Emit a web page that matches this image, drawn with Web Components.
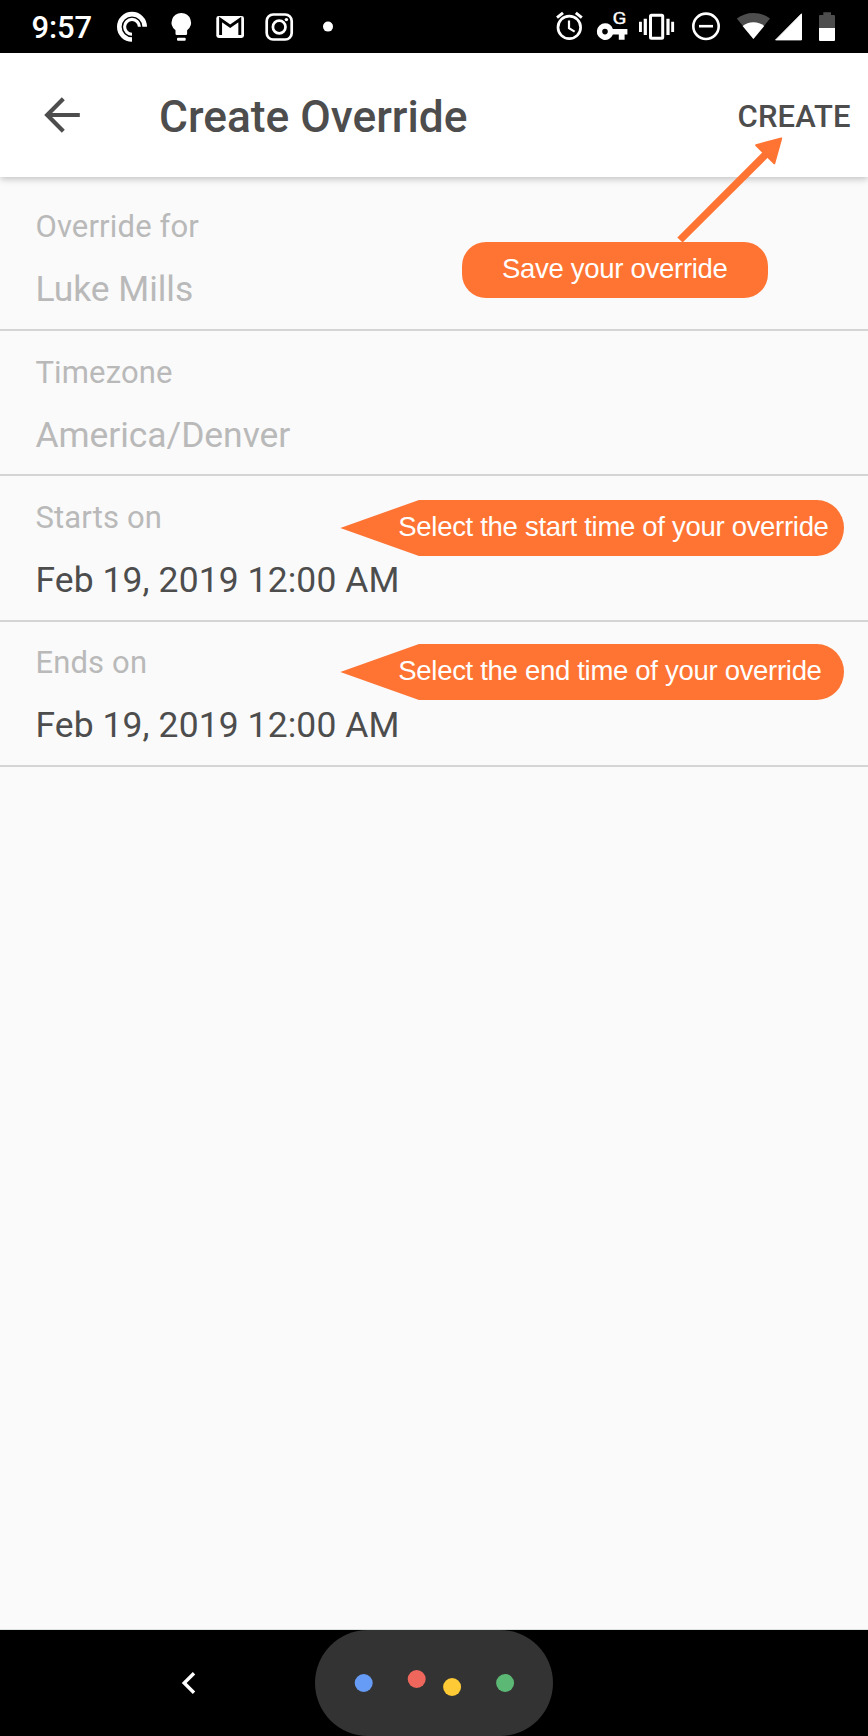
<!DOCTYPE html>
<html lang="en">
<head>
<meta charset="utf-8">
<title>Create Override</title>
<style>
html,body{margin:0;padding:0;background:#fafafa}
body{width:868px;height:1736px;overflow:hidden;font-family:Roboto,"Liberation Sans",sans-serif}
</style>
</head>
<body>
<override-screen></override-screen>
<script>
const define = (name, html) => customElements.define(name, class extends HTMLElement {
  constructor() {
    super();
    const t = document.createElement('template');
    t.innerHTML = html;
    this.attachShadow({ mode: 'open' }).appendChild(t.content.cloneNode(true));
  }
});

define('status-bar', `
<style>
:host{display:flex;height:53px;background:#000;color:#fff;flex:none}
.time{width:78.5px;padding:2px 0 0 31.5px;font-size:31px;font-weight:500;line-height:52px;white-space:nowrap;letter-spacing:-.1px;box-sizing:content-box}
svg{display:block;flex:none}
.gap{flex:1}
</style>
<span class="time">9:57</span>
<svg width="50" height="53" viewBox="110 0 50 53" fill="none" stroke="#fff"><path stroke-width="4.6" d="M144.7 26.8A12.7 12.7 0 1 0 132 39.5"/><path stroke-width="3.1" d="M139.4 26.8A7.4 7.4 0 1 0 132 34.2"/></svg>
<svg width="45" height="53" viewBox="160 0 45 53" fill="#fff"><path d="M181.3 13a9.6 9.6 0 0 1 5.8 17.3V33.8q0 1.2-1.2 1.2h-9.2q-1.2 0-1.2-1.2V30.3A9.6 9.6 0 0 1 181.3 13z"/><rect x="177" y="37.7" width="8.7" height="3" rx="1"/></svg>
<svg width="50" height="53" viewBox="205 0 50 53"><rect x="216.3" y="16" width="27.7" height="22" rx="2.4" fill="#fff"/><path d="M220.6 35V19.6L230.2 26.2 239.8 19.6V35" fill="none" stroke="#000" stroke-width="2.9"/></svg>
<svg width="50" height="53" viewBox="255 0 50 53" fill="none" stroke="#fff" stroke-width="2.7"><rect x="266.7" y="14.5" width="25" height="25" rx="6.5"/><circle cx="279.2" cy="27" r="6.3"/><circle cx="286.4" cy="19.6" r="1.7" fill="#fff" stroke="none"/></svg>
<svg width="45" height="53" viewBox="305 0 45 53"><circle cx="328" cy="26.6" r="5" fill="#fff"/></svg>
<span class="gap"></span>
<svg width="47" height="53" viewBox="545 0 47 53" fill="none" stroke="#fff"><circle cx="569.3" cy="27.4" r="11.3" stroke-width="2.7"/><path stroke-width="3" d="M557 17.6L563 12.9M581.8 17.6L575.8 12.9"/><path stroke-width="2.2" d="M569 20.5V28.2L574.6 31.6"/></svg>
<svg width="45" height="53" viewBox="592 0 45 53"><path fill="#fff" fill-rule="evenodd" d="M605 23.3a8.3 8.3 0 0 1 7.9 5.6H627.4V34.6H624.6V39.8H618.8V34.6H612.9A8.3 8.3 0 1 1 605 23.3zM605 28.8a2.8 2.8 0 1 0 0 5.6a2.8 2.8 0 1 0 0-5.6z"/><text x="612.4" y="23.6" font-size="16.5" font-weight="400" textLength="14" lengthAdjust="spacingAndGlyphs" fill="#fff" stroke="#fff" stroke-width=".3">G</text></svg>
<svg width="53" height="53" viewBox="637 0 53 53" fill="#fff"><rect x="650.5" y="15.2" width="12.2" height="23" rx="1" fill="none" stroke="#fff" stroke-width="3"/><path d="M643.7 18.7h3.2v16.3h-3.2zM639 21.8h2.9v10.3H639zM666.4 18.7h3.2v16.3h-3.2zM671.2 21.8h2.9v10.3h-2.9z"/></svg>
<svg width="40" height="53" viewBox="690 0 40 53" fill="none" stroke="#fff" stroke-width="2.6"><circle cx="706" cy="26.3" r="12.7"/><path d="M699 26.2H713"/></svg>
<svg width="43" height="53" viewBox="730 0 43 53"><path fill="#4d4d4d" d="M753.4 39L736.8 18.6Q744 13 753.4 13T770 18.6z"/><path fill="#fff" d="M753.4 39L742.6 26.1Q747 22.2 753.4 22.2T764.2 26.1z"/></svg>
<svg width="37" height="53" viewBox="773 0 37 53"><path fill="#fff" stroke="#fff" stroke-linejoin="round" d="M775.6 39.9L801.5 13.8V39.9z"/></svg>
<svg width="58" height="53" viewBox="810 0 58 53"><path fill="#4d4d4d" d="M823.3 12.3H831V15H834q1 0 1 1V28H819V16q0-1 1-1H823.3z"/><path fill="#fff" d="M819 28H835V40q0 1-1 1H820q-1 0-1-1z"/></svg>
`);

define('app-bar', `
<style>
:host{display:flex;align-items:center;height:124px;background:#fff;color:#4d4d4d;flex:none;position:relative;box-shadow:0 2px 7px rgba(0,0,0,.23);box-sizing:border-box;padding-right:17.5px}
svg{display:block;margin-left:40px;width:44px;height:44px}
h1{margin:0 auto 0 75px;padding-top:4px;font-size:44.3px;font-weight:500;line-height:52px;white-space:nowrap}
.action{font-size:31px;font-weight:500;line-height:36px;padding-top:4px;white-space:nowrap;letter-spacing:.1px}
</style>
<svg viewBox="40 93 44 44" fill="none" stroke="#4d4d4d" stroke-width="4.2"><path d="M79.8 115H48M63.3 98.8L47.2 115L63.3 131.2"/></svg>
<h1><slot></slot></h1>
<span class="action"><slot name="action"></slot></span>
`);

define('form-row', `
<style>
:host{display:block;position:relative;height:145.45px;box-sizing:border-box;padding:23.5px 35.4px 0;border-bottom:2px solid #d4d4d4;color:#4d4d4d}
:host([disabled]){color:#b9b9b9}
.label{font-size:31px;line-height:36px;color:#b9b9b9;letter-spacing:.16px}
.value{font-size:35.43px;line-height:42px;margin-top:23px;white-space:nowrap;letter-spacing:.12px}
:host([disabled]) .value{letter-spacing:-.03px}
</style>
<div class="label"><slot name="label"></slot></div>
<div class="value"><slot></slot></div>
<slot name="hint"></slot>
`);

define('save-callout', `
<style>
:host{position:absolute;left:462px;top:137px;width:306px;height:161px;z-index:2;font-family:"Liberation Sans",sans-serif;color:#fff}
svg{position:absolute;left:0;top:0}
.pill{position:absolute;left:0;top:105px;width:306px;height:56px;border-radius:24px;background:#ff7433;box-sizing:border-box;padding-left:40px;font-size:27.5px;letter-spacing:-.29px;line-height:54px;white-space:nowrap}
</style>
<svg width="330" height="110" viewBox="462 137 330 110" fill="#ff7433"><path d="M677.3 237.5L765.9 148.9L771.1 154.3L682.6 242.6z"/><path stroke="#ff7433" stroke-width="2" stroke-linejoin="round" d="M781.2 138.5L756.2 145.2L774.3 163.3z"/></svg>
<div class="pill"><slot></slot></div>
`);

define('pointer-callout', `
<style>
:host{position:absolute;left:340px;width:504px;height:56px;font-family:"Liberation Sans",sans-serif;color:#fff}
svg{position:absolute;left:0;top:0}
span{position:absolute;left:58.3px;top:0;font-size:27.5px;letter-spacing:-.3px;line-height:54px;white-space:nowrap}
</style>
<svg width="504" height="56" viewBox="0 0 504 56"><path fill="#ff7433" d="M.3 28L79 0H477a27 28 0 0 1 0 56H79z"/></svg>
<span><slot></slot></span>
`);

define('nav-bar', `
<style>
:host{display:flex;height:106px;background:#000;box-shadow:0 -1px #dce2de;flex:none}
.back{margin-left:168px;flex:none}
.pill{margin-left:106.7px;width:238.3px;height:106px;border-radius:53px;background:#333;flex:none}
svg{display:block}
</style>
<svg class="back" width="40" height="106" viewBox="168 1630 40 106" fill="none" stroke="#fff" stroke-width="3.4"><path d="M194 1673.3L184.2 1683L194 1692.7"/></svg>
<div class="pill"><svg width="238.3" height="106" viewBox="314.7 1630 238.3 106"><circle cx="363.4" cy="1683" r="9" fill="#679cf6"/><circle cx="416.4" cy="1679" r="9" fill="#ef675c"/><circle cx="451.8" cy="1687" r="9" fill="#fecb36"/><circle cx="504.8" cy="1683" r="9" fill="#5cb975"/></svg></div>
`);

define('override-screen', `
<style>
:host{display:flex;flex-direction:column;width:868px;height:1736px;position:relative;background:#fafafa;overflow:hidden}
main{flex:1;padding-top:8.6px}
pointer-callout.start{top:23.5px}
pointer-callout.end{top:22px}
</style>
<status-bar></status-bar>
<app-bar>Create Override<span slot="action">CREATE</span></app-bar>
<main>
<form-row disabled><span slot="label">Override for</span>Luke Mills</form-row>
<form-row disabled><span slot="label">Timezone</span>America/Denver</form-row>
<form-row><span slot="label">Starts on</span>Feb 19, 2019 12:00 AM<pointer-callout slot="hint" class="start">Select the start time of your override</pointer-callout></form-row>
<form-row><span slot="label">Ends on</span>Feb 19, 2019 12:00 AM<pointer-callout slot="hint" class="end">Select the end time of your override</pointer-callout></form-row>
</main>
<nav-bar></nav-bar>
<save-callout>Save your override</save-callout>
`);
</script>
</body>
</html>
